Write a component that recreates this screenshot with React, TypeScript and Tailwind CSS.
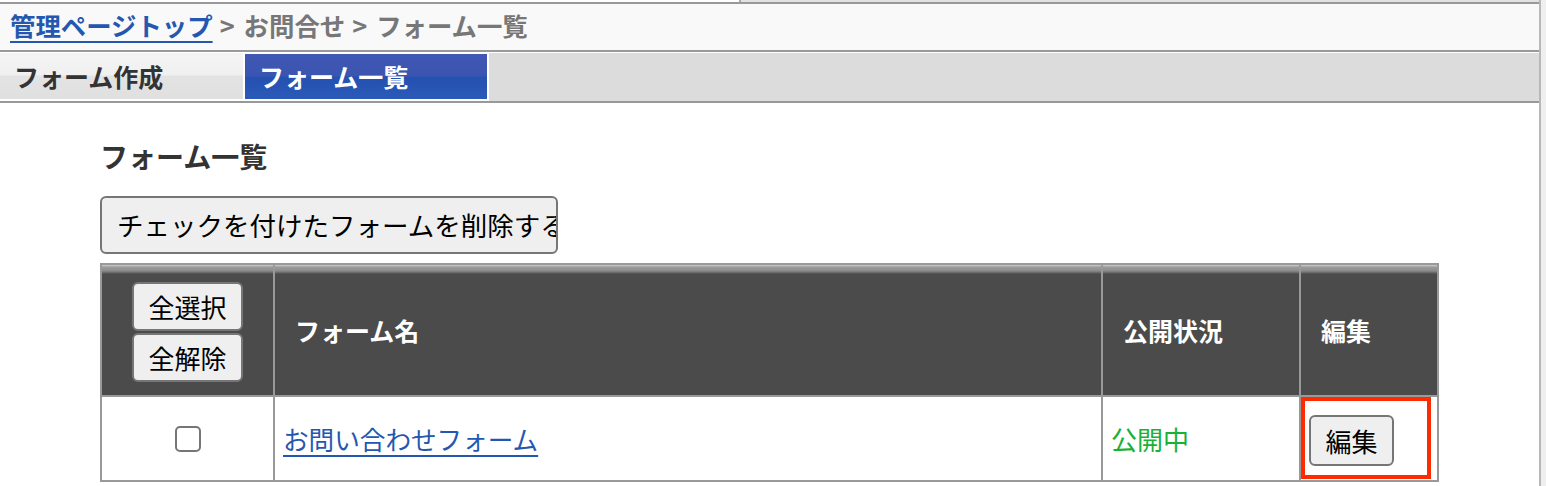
export default function App() {
  return (
    <div className="flex h-[486px] w-[1546px] overflow-hidden bg-white font-[family-name:'Noto_Sans_CJK_JP','Noto_Sans',sans-serif]">
      <div className="flex w-[1539px] shrink-0 flex-col">
        <div className="flex h-[2px]">
          <div className="w-[739px] bg-white" />
          <div className="w-[2px] bg-[#aaaaaa]" />
          <div className="flex-1 bg-[#e2e2e2]" />
        </div>
        <div className="h-[2px] bg-[#999999]" />
        <div className="flex h-[46px] items-center whitespace-nowrap bg-[#f9f9f9] pb-[3px] pl-[10px] text-[25.4px] font-bold leading-none text-[#777777]">
          <a href="#" className="text-[#2458b0] underline decoration-2 underline-offset-[5px]">
            管理ページトップ
          </a>
          <span className="ml-[7px] mr-[9px]">&gt;</span>
          <span>お問合せ</span>
          <span className="ml-[7px] mr-[9px]">&gt;</span>
          <span>フォーム一覧</span>
        </div>
        <div className="h-[2px] bg-[#999999]" />
        <div className="h-px bg-white" />
        <div className="flex h-[48px] bg-[#dcdcdc]">
          <div className="flex w-[245px] items-center border-b-2 border-r-2 border-white bg-[linear-gradient(to_bottom,#f4f4f4_0%,#f0f0f0_48%,#e3e3e3_50%,#e0e0e0_100%)] pl-[14px] text-[25px] font-bold leading-none text-[#333333]">
            フォーム作成
          </div>
          <div className="flex w-[244px] items-center border-b-2 border-r-2 border-t border-white bg-[linear-gradient(to_bottom,#4157b3_0%,#3a55b1_48%,#2551b0_52%,#2a5ab8_100%)] pl-[14px] text-[25px] font-bold leading-none text-white">
            フォーム一覧
          </div>
        </div>
        <div className="h-[2px] bg-[#999999]" />
        <div className="flex-1 pl-[100px]">
          <h2 className="mt-[32px] h-[42px] text-[28px] font-bold leading-[42px] text-[#333333]">
            フォーム一覧
          </h2>
          <button className="mt-[19px] flex h-[58px] w-[458px] items-center overflow-hidden whitespace-nowrap rounded-[6px] border-2 border-[#767676] bg-[#efefef] pl-[15px] text-[26.5px] leading-none text-black">
            チェックを付けたフォームを削除する
          </button>
          <div className="mt-[9px] grid w-fit grid-cols-[173px_828px_198px_138px] border-b-2 border-r-2 border-t-2 border-[#999999]">
            <div className="flex h-[130px] flex-col items-center justify-center gap-[2px] border-l-2 border-[#999999] bg-[linear-gradient(to_bottom,#d0d0d0_0px,#9c9c9c_2px,#8a8a8a_6px,#4b4b4b_9px,#4b4b4b_100%)] pt-[4px]">
              <button className="h-[49px] w-[111px] rounded-[6px] border-2 border-[#767676] bg-[#efefef] text-[26px] leading-none text-black">
                全選択
              </button>
              <button className="h-[49px] w-[111px] rounded-[6px] border-2 border-[#767676] bg-[#efefef] text-[26px] leading-none text-black">
                全解除
              </button>
            </div>
            <div className="flex h-[130px] items-center border-l-2 border-[#999999] bg-[linear-gradient(to_bottom,#d0d0d0_0px,#9c9c9c_2px,#8a8a8a_6px,#4b4b4b_9px,#4b4b4b_100%)] pl-[20px] text-[25px] font-bold leading-none text-white">
              フォーム名
            </div>
            <div className="flex h-[130px] items-center border-l-2 border-[#999999] bg-[linear-gradient(to_bottom,#d0d0d0_0px,#9c9c9c_2px,#8a8a8a_6px,#4b4b4b_9px,#4b4b4b_100%)] pl-[20px] text-[25px] font-bold leading-none text-white">
              公開状況
            </div>
            <div className="flex h-[130px] items-center border-l-2 border-[#999999] bg-[linear-gradient(to_bottom,#d0d0d0_0px,#9c9c9c_2px,#8a8a8a_6px,#4b4b4b_9px,#4b4b4b_100%)] pl-[20px] text-[25px] font-bold leading-none text-white">
              編集
            </div>

            <div className="flex h-[85px] items-center justify-center border-l-2 border-t-2 border-[#999999]">
              <span className="block h-[26px] w-[26px] rounded-[5px] border-2 border-[#767676] bg-white" />
            </div>
            <div className="flex h-[85px] items-center border-l-2 border-t-2 border-[#999999] pl-[8px] text-[25.6px] leading-none">
              <a href="#" className="text-[#2458b0] underline decoration-2 underline-offset-[5px]">
                お問い合わせフォーム
              </a>
            </div>
            <div className="flex h-[85px] items-center border-l-2 border-t-2 border-[#999999] pl-[8px] text-[26px] leading-none text-[#18b234]">
              公開中
            </div>
            <div className="relative flex h-[85px] items-start border-l-2 border-t-2 border-[#999999] pl-[8px] pt-[18px]">
              <button className="h-[51px] w-[85px] rounded-[6px] border-2 border-[#767676] bg-[#efefef] text-[26px] leading-none text-black">
                編集
              </button>
              <div className="pointer-events-none absolute left-0 top-0 h-[82px] w-[130px] border-4 border-[#ff2a00]" />
            </div>
          </div>
        </div>
      </div>
      <div className="w-[2px] shrink-0 bg-[#b8b8b8]" />
      <div className="flex-1 bg-[#efefef]" />
    </div>
  );
}
